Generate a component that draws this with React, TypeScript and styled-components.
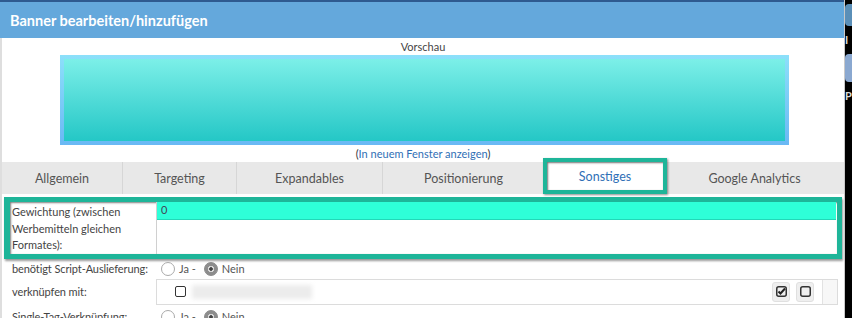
import React from "react";
import styled, { createGlobalStyle } from "styled-components";

const GlobalStyle = createGlobalStyle`
  html, body {
    margin: 0;
    padding: 0;
    background: #000;
  }
  body {
    font-family: Lato, "Open Sans", sans-serif;
    color: #444;
  }
`;

const Page = styled.div`
  display: flex;
  width: 852px;
  height: 318px;
  overflow: hidden;
`;

const Dialog = styled.div`
  width: 844px;
  flex-shrink: 0;
  background: #fff;
  border-right: 1px solid #c9c9c9;
  display: flex;
  flex-direction: column;
  overflow: hidden;

  & > * {
    flex-shrink: 0;
  }
`;

const Desktop = styled.div`
  flex: 1;
  background: #000;
  display: flex;
  flex-direction: column;
  gap: 8px;
  padding-top: 4px;
  overflow: hidden;
`;

const DeskIcon = styled.div<{ $color: string; $h: number }>`
  width: 7px;
  height: ${(p) => p.$h}px;
  border-radius: 4px 0 0 4px;
  background: ${(p) => p.$color};
`;

const DeskLabel = styled.div`
  color: #ddd;
  font-size: 11px;
  line-height: 12px;
  font-weight: 700;
`;

const Header = styled.div`
  height: 36px;
  border-top: 2px solid #2e5a90;
  background: #64a8dc;
  color: #fff;
  font-weight: 700;
  font-size: 14.5px;
  display: flex;
  align-items: center;
  padding-left: 10px;
`;

const Body = styled.div`
  flex: 1;
  border-left: 2px solid #dedede;
  display: flex;
  flex-direction: column;

  & > * {
    flex-shrink: 0;
  }
`;

const Caption = styled.div`
  text-align: center;
  font-size: 11px;
  line-height: 14px;
  padding-top: 2px;
  color: #444;
`;

const PreviewFrame = styled.div`
  margin: 1px 55px 0 58px;
  height: 90px;
  padding: 4px;
  box-sizing: border-box;
  background: linear-gradient(#8ce0fa, #6ab8f4);
`;

const PreviewBanner = styled.div`
  height: 100%;
  background: linear-gradient(#7cefe8, #24c7c6);
`;

const OpenLink = styled.div`
  text-align: center;
  font-size: 11px;
  line-height: 14px;
  padding-top: 2px;
  color: #333;

  span {
    color: #2f6fb6;
  }
`;

const TabBar = styled.div`
  margin-top: 1px;
  height: 32px;
  background: #e8e8e8;
  display: flex;
`;

const Tab = styled.div<{ $w: number; $active?: boolean }>`
  width: ${(p) => p.$w}px;
  flex-shrink: 0;
  box-sizing: border-box;
  display: flex;
  align-items: center;
  justify-content: center;
  font-size: 12.5px;
  color: ${(p) => (p.$active ? "#2f6fb6" : "#555")};
  border-right: ${(p) => (p.$active ? "none" : "1px solid #d6d6d6")};
  &:last-child {
    border-right: none;
  }
`;

const ActiveTab = styled.div`
  width: 124px;
  height: 36px;
  margin: -4px -2px 0;
  box-sizing: border-box;
  border: 4px solid #1eb599;
  box-shadow: 1px 1px 2px rgba(0, 0, 0, 0.45),
    inset 1px 1px 2px rgba(0, 0, 0, 0.55);
  background: #fff;
  display: flex;
  align-items: center;
  justify-content: center;
`;

const Highlight = styled.div`
  margin: 3px 2px 0 2px;
  border: 5px solid #1eb599;
  border-left-width: 6px;
  box-shadow: 1px 2px 2px rgba(0, 0, 0, 0.4),
    inset 1px 1px 2px rgba(0, 0, 0, 0.5);
  background: #fff;
`;

const Row = styled.div<{ $h?: number }>`
  display: grid;
  grid-template-columns: 152px 1fr;
  min-height: ${(p) => p.$h ?? 22}px;
  align-items: center;
  font-size: 11px;
`;

const WeightRow = styled(Row)`
  grid-template-columns: 146px 1fr;
`;

const Label = styled.div`
  padding-left: 8px;
  color: #444;
  white-space: nowrap;
  letter-spacing: -0.1px;
`;

const WeightLabel = styled.div`
  align-self: stretch;
  padding: 2px 0 0 2px;
  line-height: 16.5px;
  font-size: 11px;
  color: #444;
`;

const WeightCell = styled.div`
  align-self: stretch;
  margin-right: 1px;
  border-left: 1px solid #d0d0d0;
`;

const WeightInput = styled.div`
  height: 17px;
  background: #2effd8;
  border-bottom: 1px solid #22d8b8;
  font-size: 11px;
  line-height: 16px;
  padding-left: 4px;
  color: #445;
`;

const RowsGrid = styled.div`
  padding-left: 2px;
  margin-right: 6px;
`;

const Radios = styled.div`
  display: flex;
  align-items: center;
  gap: 4px;
  padding-left: 5px;
  color: #555;
`;

const Radio = styled.span<{ $on?: boolean }>`
  width: 14px;
  height: 14px;
  border-radius: 50%;
  box-sizing: border-box;
  border: 1px solid ${(p) => (p.$on ? "#8a8a8a" : "#aaa")};
  background: ${(p) =>
    p.$on
      ? "radial-gradient(circle, #444 0 1.5px, #d8d8d8 2px 3px, #8d8d8d 3.5px)"
      : "#fff"};
  margin-left: ${(p) => (p.$on ? 4 : 0)}px;
`;

const LinkBox = styled.div`
  height: 24px;
  border: 1px solid #dcdcdc;
  display: flex;
  align-items: center;
  padding-left: 18px;
`;

const Check = styled.span`
  width: 9px;
  height: 9px;
  border: 1.5px solid #333;
  border-radius: 2px;
  flex-shrink: 0;
`;

const Blurred = styled.span`
  margin-left: 6px;
  width: 120px;
  height: 14px;
  background: #ececec;
  filter: blur(2px);
`;

const Spacer = styled.div`
  flex: 1;
`;

const ToolBtn = styled.span`
  width: 16px;
  height: 18px;
  margin-right: 6px;
  background: #efefef;
  border: 1px solid #e0e0e0;
  border-radius: 3px;
  display: flex;
  align-items: center;
  justify-content: center;
`;

const EndCell = styled.div`
  width: 14px;
  align-self: stretch;
  border-left: 1px solid #e2e2e2;
  background: #f7f7f7;
  margin-left: 2px;
`;

const tabs = [
  { name: "Allgemein", w: 121 },
  { name: "Targeting", w: 114 },
  { name: "Expandables", w: 146 },
  { name: "Positionierung", w: 162 },
  { name: "Sonstiges", w: 120, active: true },
  { name: "Google Analytics", w: 179 },
];

export default function App() {
  return (
    <Page>
      <GlobalStyle />
      <Dialog>
        <Header>Banner bearbeiten/hinzufügen</Header>
        <Body>
          <Caption>Vorschau</Caption>
          <PreviewFrame>
            <PreviewBanner />
          </PreviewFrame>
          <OpenLink>
            (<span>In neuem Fenster anzeigen</span>)
          </OpenLink>
          <TabBar>
            {tabs.map((t) => (
              <Tab key={t.name} $w={t.w} $active={t.active}>
                {t.active ? <ActiveTab>{t.name}</ActiveTab> : t.name}
              </Tab>
            ))}
          </TabBar>
          <Highlight>
            <WeightRow $h={51}>
              <WeightLabel>
                Gewichtung (zwischen
                <br />
                Werbemitteln gleichen
                <br />
                Formates):
              </WeightLabel>
              <WeightCell>
                <WeightInput>0</WeightInput>
              </WeightCell>
            </WeightRow>
          </Highlight>
          <RowsGrid>
            <Row $h={20}>
              <Label>benötigt Script-Auslieferung:</Label>
              <Radios>
                <Radio /> Ja - <Radio $on /> Nein
              </Radios>
            </Row>
            <Row $h={25}>
              <Label>verknüpfen mit:</Label>
              <LinkBox>
                <Check />
                <Blurred />
                <Spacer />
                <ToolBtn>
                  <svg width="11" height="11" viewBox="0 0 11 11">
                    <rect x="0.75" y="0.75" width="9.5" height="9.5" rx="2" fill="none" stroke="#333" strokeWidth="1.5" />
                    <path d="M2.5 5.5 L4.5 7.5 L9 2.5" fill="none" stroke="#222" strokeWidth="2" />
                  </svg>
                </ToolBtn>
                <ToolBtn>
                  <svg width="11" height="11" viewBox="0 0 11 11">
                    <rect x="0.75" y="0.75" width="9.5" height="9.5" rx="2" fill="none" stroke="#333" strokeWidth="1.5" />
                  </svg>
                </ToolBtn>
                <EndCell />
              </LinkBox>
            </Row>
            <Row $h={24}>
              <Label>Single-Tag-Verknüpfung:</Label>
              <Radios>
                <Radio /> Ja - <Radio $on /> Nein
              </Radios>
            </Row>
          </RowsGrid>
        </Body>
      </Dialog>
      <Desktop>
        <DeskIcon $color="#5a8fb8" $h={22} />
        <DeskLabel>I</DeskLabel>
        <DeskIcon $color="#8aa8d0" $h={28} />
        <DeskLabel>P</DeskLabel>
      </Desktop>
    </Page>
  );
}
